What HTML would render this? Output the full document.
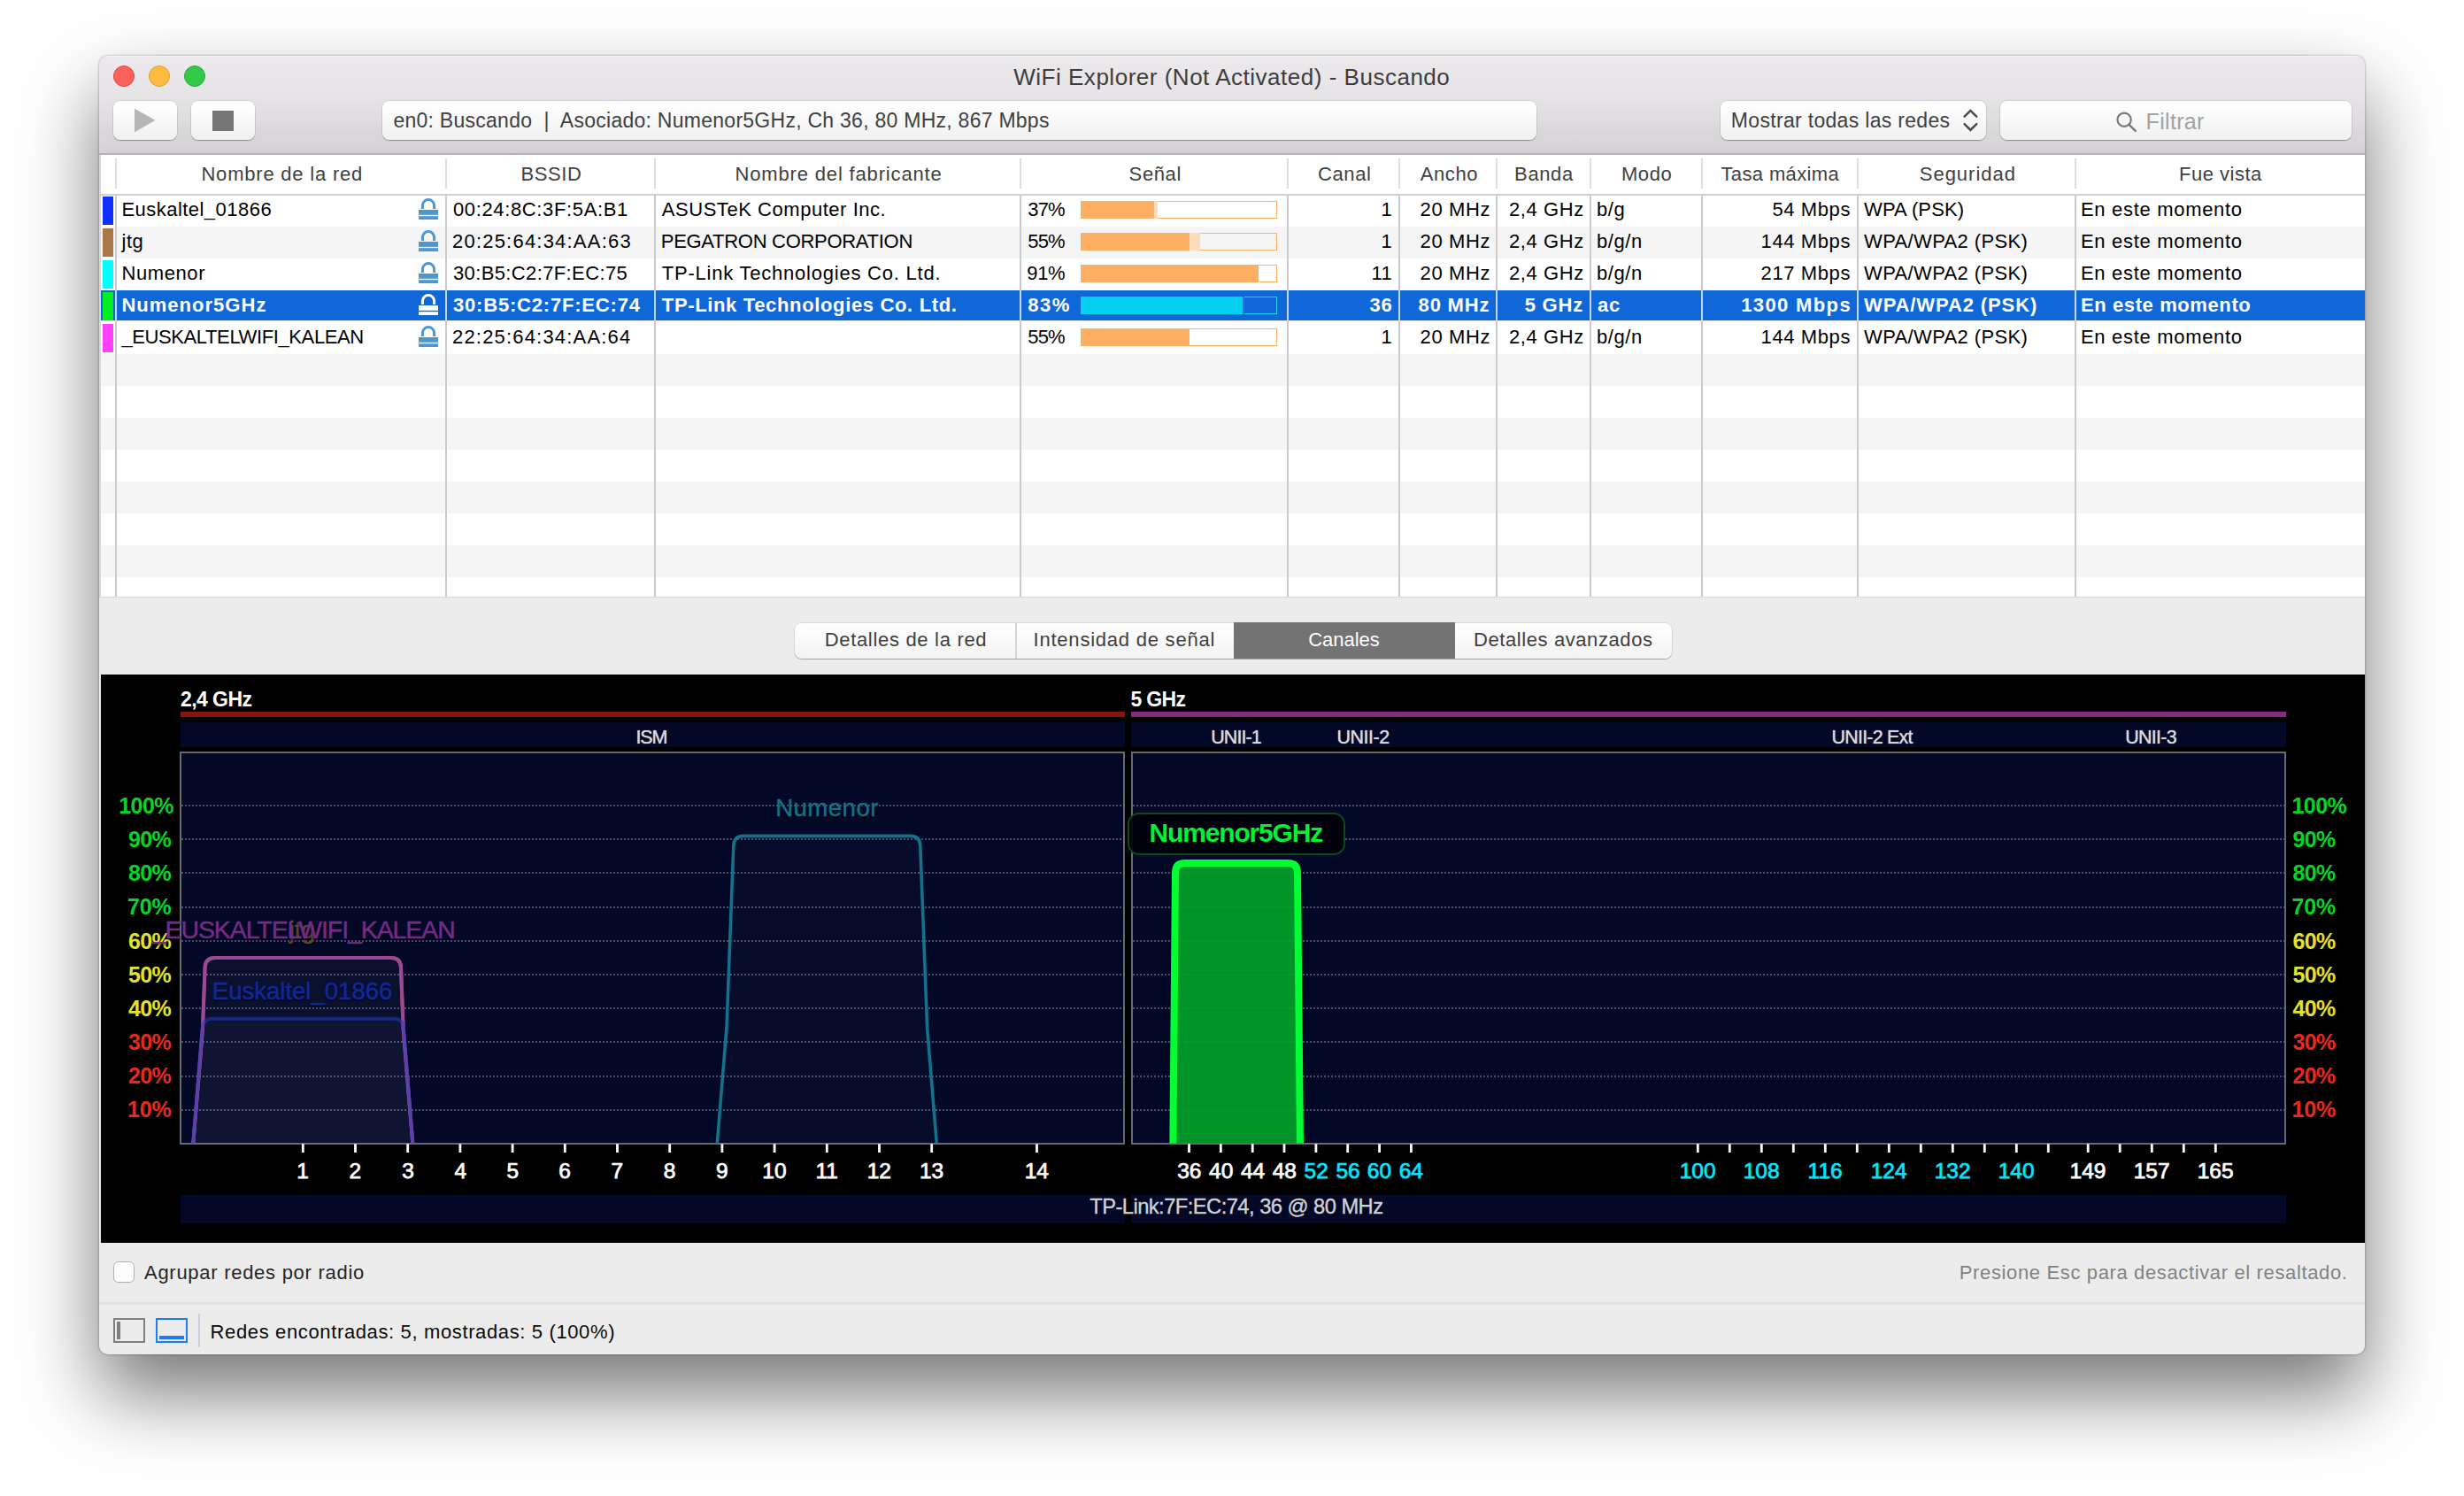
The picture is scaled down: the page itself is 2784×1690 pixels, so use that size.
<!DOCTYPE html>
<html lang="es"><head><meta charset="utf-8"><title>WiFi Explorer (Not Activated) - Buscando</title>
<style>
html,body{margin:0;padding:0;}
body{width:2784px;height:1690px;background:#fff;overflow:hidden;position:relative;font-family:"Liberation Sans", sans-serif;}
#win{position:absolute;left:112px;top:63px;width:2560px;height:1467px;border-radius:10px;background:#ececec;
box-shadow:0 44px 88px rgba(0,0,0,0.54),0 0 2.5px rgba(0,0,0,0.45);}
#clip{position:absolute;left:0;top:0;width:2560px;height:1467px;border-radius:10px;overflow:hidden;}
#clip div{position:absolute;box-sizing:border-box;}
#clip svg{position:absolute;overflow:visible;}
.t{font-family:"Liberation Sans", sans-serif;}
</style></head>
<body><div id="win"><div id="clip">
<div style="left:0.00px;top:0.00px;width:2560.00px;height:112.00px;background:linear-gradient(#ebe9eb 0%,#e6e4e6 40%,#d3d1d3 100%);border-bottom:2px solid #b4b2b4;border-top:1px solid #f6f5f6;"></div>
<div style="left:16.00px;top:11.00px;width:24.00px;height:24.00px;border-radius:50%;background:#fc605b;border:1px solid #e0443e;"></div>
<div style="left:56.00px;top:11.00px;width:24.00px;height:24.00px;border-radius:50%;background:#fdbc40;border:1px solid #dfa02a;"></div>
<div style="left:96.00px;top:11.00px;width:24.00px;height:24.00px;border-radius:50%;background:#34c84a;border:1px solid #27aa35;"></div>
<div id="t0" class="t" style="left:1033.25px;top:11.00px;font-size:26px;line-height:26px;height:26px;color:#3d3d3d;font-weight:normal;white-space:pre;letter-spacing:0.514px;">WiFi Explorer (Not Activated) - Buscando</div>
<div style="left:16.00px;top:51.00px;width:72.00px;height:44.00px;border-radius:8px;background:linear-gradient(#ffffff,#f1f1f1);box-shadow:0 1px 1px rgba(0,0,0,0.28),0 0 0 1px rgba(0,0,0,0.07);"></div>
<div style="left:104.00px;top:51.00px;width:72.00px;height:44.00px;border-radius:8px;background:linear-gradient(#ffffff,#f1f1f1);box-shadow:0 1px 1px rgba(0,0,0,0.28),0 0 0 1px rgba(0,0,0,0.07);"></div>
<svg style="left:40px;top:59px" width="26" height="30"><polygon points="0,0.8 0,27.6 23.4,13.7" fill="#b6b6b6"/></svg>
<div style="left:128.00px;top:61.50px;width:24.00px;height:23.50px;background:#757575;"></div>
<div style="left:320.00px;top:51.00px;width:1304.00px;height:44.00px;border-radius:8px;background:linear-gradient(#ffffff,#f1f1f1);box-shadow:0 1px 1px rgba(0,0,0,0.28),0 0 0 1px rgba(0,0,0,0.07);"></div>
<div id="t1" class="t" style="left:332.40px;top:61.50px;font-size:23px;line-height:23px;height:23px;color:#404040;font-weight:normal;white-space:pre;letter-spacing:0.263px;">en0: Buscando  |  Asociado: Numenor5GHz, Ch 36, 80 MHz, 867 Mbps</div>
<div style="left:1832.00px;top:51.00px;width:300.00px;height:44.00px;border-radius:8px;background:linear-gradient(#ffffff,#f1f1f1);box-shadow:0 1px 1px rgba(0,0,0,0.28),0 0 0 1px rgba(0,0,0,0.07);"></div>
<div id="t2" class="t" style="left:1843.80px;top:61.50px;font-size:23px;line-height:23px;height:23px;color:#404040;font-weight:normal;white-space:pre;letter-spacing:0.317px;">Mostrar todas las redes</div>
<svg style="left:2104px;top:61px" width="22" height="26"><path d="M3.6 7.6 L10.4 0.9 L17.2 7.6 M3.6 16.2 L10.4 22.9 L17.2 16.2" fill="none" stroke="#4a4a4a" stroke-width="2.5" stroke-linecap="round" stroke-linejoin="miter"/></svg>
<div style="left:2148.00px;top:51.00px;width:396.50px;height:44.00px;border-radius:8px;background:linear-gradient(#ffffff,#f1f1f1);box-shadow:0 1px 1px rgba(0,0,0,0.28),0 0 0 1px rgba(0,0,0,0.07);"></div>
<svg style="left:2278px;top:62px" width="26" height="26"><circle cx="10.1" cy="10.2" r="7.6" fill="none" stroke="#7a7a7a" stroke-width="2.2"/><path d="M15.6 15.8 L22.8 22.9" stroke="#7a7a7a" stroke-width="2.4" stroke-linecap="round"/></svg>
<div id="t3" class="t" style="left:2312.60px;top:61.50px;font-size:25px;line-height:25px;height:25px;color:#a2a2a2;font-weight:normal;white-space:pre;letter-spacing:0.308px;">Filtrar</div>
<div style="left:0.00px;top:112.00px;width:2560.00px;height:499.00px;background:#fff;"></div>
<div style="left:0.00px;top:611.00px;width:2560.00px;height:1.00px;background:#d6d6d6;"></div>
<div style="left:0.00px;top:112.00px;width:2.00px;height:499.00px;background:#d9d9d9;"></div>
<div style="left:2.00px;top:193.00px;width:2558.00px;height:36.00px;background:#f5f5f5;"></div>
<div style="left:2.00px;top:265.00px;width:2558.00px;height:36.00px;background:#f5f5f5;"></div>
<div style="left:2.00px;top:337.00px;width:2558.00px;height:36.00px;background:#f5f5f5;"></div>
<div style="left:2.00px;top:409.00px;width:2558.00px;height:36.00px;background:#f5f5f5;"></div>
<div style="left:2.00px;top:481.00px;width:2558.00px;height:36.00px;background:#f5f5f5;"></div>
<div style="left:2.00px;top:553.00px;width:2558.00px;height:36.00px;background:#f5f5f5;"></div>
<div style="left:0.00px;top:156.00px;width:2560.00px;height:1.50px;background:#d2d2d2;"></div>
<div style="left:2.00px;top:265.00px;width:2558.00px;height:34.00px;background:#1068d8;"></div>
<div style="left:18.00px;top:116.30px;width:2.00px;height:34.20px;background:#dedede;"></div>
<div style="left:18.00px;top:157.00px;width:2.00px;height:454.00px;background:#cccccc;"></div>
<div style="left:18.00px;top:265.00px;width:2.00px;height:34.00px;background:#c4d4ea;"></div>
<div style="left:390.50px;top:116.30px;width:2.00px;height:34.20px;background:#dedede;"></div>
<div style="left:390.50px;top:157.00px;width:2.00px;height:454.00px;background:#cccccc;"></div>
<div style="left:390.50px;top:265.00px;width:2.00px;height:34.00px;background:#c4d4ea;"></div>
<div style="left:627.00px;top:116.30px;width:2.00px;height:34.20px;background:#dedede;"></div>
<div style="left:627.00px;top:157.00px;width:2.00px;height:454.00px;background:#cccccc;"></div>
<div style="left:627.00px;top:265.00px;width:2.00px;height:34.00px;background:#c4d4ea;"></div>
<div style="left:1040.00px;top:116.30px;width:2.00px;height:34.20px;background:#dedede;"></div>
<div style="left:1040.00px;top:157.00px;width:2.00px;height:454.00px;background:#cccccc;"></div>
<div style="left:1040.00px;top:265.00px;width:2.00px;height:34.00px;background:#c4d4ea;"></div>
<div style="left:1342.00px;top:116.30px;width:2.00px;height:34.20px;background:#dedede;"></div>
<div style="left:1342.00px;top:157.00px;width:2.00px;height:454.00px;background:#cccccc;"></div>
<div style="left:1342.00px;top:265.00px;width:2.00px;height:34.00px;background:#c4d4ea;"></div>
<div style="left:1468.00px;top:116.30px;width:2.00px;height:34.20px;background:#dedede;"></div>
<div style="left:1468.00px;top:157.00px;width:2.00px;height:454.00px;background:#cccccc;"></div>
<div style="left:1468.00px;top:265.00px;width:2.00px;height:34.00px;background:#c4d4ea;"></div>
<div style="left:1578.00px;top:116.30px;width:2.00px;height:34.20px;background:#dedede;"></div>
<div style="left:1578.00px;top:157.00px;width:2.00px;height:454.00px;background:#cccccc;"></div>
<div style="left:1578.00px;top:265.00px;width:2.00px;height:34.00px;background:#c4d4ea;"></div>
<div style="left:1684.00px;top:116.30px;width:2.00px;height:34.20px;background:#dedede;"></div>
<div style="left:1684.00px;top:157.00px;width:2.00px;height:454.00px;background:#cccccc;"></div>
<div style="left:1684.00px;top:265.00px;width:2.00px;height:34.00px;background:#c4d4ea;"></div>
<div style="left:1809.50px;top:116.30px;width:2.00px;height:34.20px;background:#dedede;"></div>
<div style="left:1809.50px;top:157.00px;width:2.00px;height:454.00px;background:#cccccc;"></div>
<div style="left:1809.50px;top:265.00px;width:2.00px;height:34.00px;background:#c4d4ea;"></div>
<div style="left:1985.50px;top:116.30px;width:2.00px;height:34.20px;background:#dedede;"></div>
<div style="left:1985.50px;top:157.00px;width:2.00px;height:454.00px;background:#cccccc;"></div>
<div style="left:1985.50px;top:265.00px;width:2.00px;height:34.00px;background:#c4d4ea;"></div>
<div style="left:2232.00px;top:116.30px;width:2.00px;height:34.20px;background:#dedede;"></div>
<div style="left:2232.00px;top:157.00px;width:2.00px;height:454.00px;background:#cccccc;"></div>
<div style="left:2232.00px;top:265.00px;width:2.00px;height:34.00px;background:#c4d4ea;"></div>
<div id="t4" class="t" style="left:115.45px;top:122.50px;font-size:22px;line-height:22px;height:22px;color:#404040;font-weight:normal;white-space:pre;letter-spacing:0.791px;">Nombre de la red</div>
<div id="t5" class="t" style="left:476.48px;top:122.50px;font-size:22px;line-height:22px;height:22px;color:#404040;font-weight:normal;white-space:pre;letter-spacing:0.600px;">BSSID</div>
<div id="t6" class="t" style="left:718.50px;top:122.50px;font-size:22px;line-height:22px;height:22px;color:#404040;font-weight:normal;white-space:pre;letter-spacing:0.840px;">Nombre del fabricante</div>
<div id="t7" class="t" style="left:1163.61px;top:122.50px;font-size:22px;line-height:22px;height:22px;color:#404040;font-weight:normal;white-space:pre;letter-spacing:0.600px;">Señal</div>
<div id="t8" class="t" style="left:1377.00px;top:122.50px;font-size:22px;line-height:22px;height:22px;color:#404040;font-weight:normal;white-space:pre;letter-spacing:0.600px;">Canal</div>
<div id="t9" class="t" style="left:1492.73px;top:122.50px;font-size:22px;line-height:22px;height:22px;color:#404040;font-weight:normal;white-space:pre;letter-spacing:0.600px;">Ancho</div>
<div id="t10" class="t" style="left:1599.11px;top:122.50px;font-size:22px;line-height:22px;height:22px;color:#404040;font-weight:normal;white-space:pre;letter-spacing:0.600px;">Banda</div>
<div id="t11" class="t" style="left:1719.95px;top:122.50px;font-size:22px;line-height:22px;height:22px;color:#404040;font-weight:normal;white-space:pre;letter-spacing:0.600px;">Modo</div>
<div id="t12" class="t" style="left:1832.50px;top:122.50px;font-size:22px;line-height:22px;height:22px;color:#404040;font-weight:normal;white-space:pre;letter-spacing:0.364px;">Tasa máxima</div>
<div id="t13" class="t" style="left:2056.75px;top:122.50px;font-size:22px;line-height:22px;height:22px;color:#404040;font-weight:normal;white-space:pre;letter-spacing:0.992px;">Seguridad</div>
<div id="t14" class="t" style="left:2350.00px;top:122.50px;font-size:22px;line-height:22px;height:22px;color:#404040;font-weight:normal;white-space:pre;letter-spacing:0.497px;">Fue vista</div>
<div style="left:4.00px;top:159.00px;width:12.00px;height:32.00px;background:#1030ff;"></div>
<div id="t15" class="t" style="left:25.40px;top:162.50px;font-size:22px;line-height:22px;height:22px;color:#000;font-weight:normal;white-space:pre;letter-spacing:0.468px;">Euskaltel_01866</div>
<svg style="left:360px;top:161px" width="24" height="26"><path d="M5.4 12 V8.2 A6.6 6.6 0 0 1 18.6 8.2 V12" fill="none" stroke="#4f95cf" stroke-width="3"/><rect x="1" y="13" width="22" height="5.8" fill="#4f95cf"/><rect x="1" y="20.2" width="22" height="3.8" fill="#4f95cf"/></svg>
<div id="t16" class="t" style="left:400.00px;top:162.50px;font-size:22px;line-height:22px;height:22px;color:#000;font-weight:normal;white-space:pre;letter-spacing:0.632px;">00:24:8C:3F:5A:B1</div>
<div id="t17" class="t" style="left:635.80px;top:162.50px;font-size:22px;line-height:22px;height:22px;color:#000;font-weight:normal;white-space:pre;letter-spacing:0.541px;">ASUSTeK Computer Inc.</div>
<div id="t18" class="t" style="left:1049.20px;top:162.50px;font-size:22px;line-height:22px;height:22px;color:#000;font-weight:normal;white-space:pre;letter-spacing:-0.785px;">37%</div>
<div style="left:1109.00px;top:164.00px;width:222.00px;height:20.00px;border:1.5px solid #fdb063;"></div>
<div style="left:1109.00px;top:164.00px;width:86.80px;height:20.00px;background:#fbdcbc;"></div>
<div style="left:1109.00px;top:164.00px;width:83.03px;height:20.00px;background:#fdb063;"></div>
<div id="t19" class="t" style="left:1448.60px;top:162.50px;font-size:22px;line-height:22px;height:22px;color:#000;font-weight:normal;white-space:pre;letter-spacing:0.600px;">1</div>
<div id="t20" class="t" style="left:1492.60px;top:162.50px;font-size:22px;line-height:22px;height:22px;color:#000;font-weight:normal;white-space:pre;letter-spacing:0.600px;">20 MHz</div>
<div id="t21" class="t" style="left:1592.90px;top:162.50px;font-size:22px;line-height:22px;height:22px;color:#000;font-weight:normal;white-space:pre;letter-spacing:0.600px;">2,4 GHz</div>
<div id="t22" class="t" style="left:1691.90px;top:162.50px;font-size:22px;line-height:22px;height:22px;color:#000;font-weight:normal;white-space:pre;letter-spacing:0.600px;">b/g</div>
<div id="t23" class="t" style="left:1890.42px;top:162.50px;font-size:22px;line-height:22px;height:22px;color:#000;font-weight:normal;white-space:pre;letter-spacing:0.600px;">54 Mbps</div>
<div id="t24" class="t" style="left:1994.00px;top:162.50px;font-size:22px;line-height:22px;height:22px;color:#000;font-weight:normal;white-space:pre;letter-spacing:0.133px;">WPA (PSK)</div>
<div id="t25" class="t" style="left:2239.00px;top:162.50px;font-size:22px;line-height:22px;height:22px;color:#000;font-weight:normal;white-space:pre;letter-spacing:0.687px;">En este momento</div>
<div style="left:4.00px;top:195.00px;width:12.00px;height:32.00px;background:#a87848;"></div>
<div id="t26" class="t" style="left:25.40px;top:198.50px;font-size:22px;line-height:22px;height:22px;color:#000;font-weight:normal;white-space:pre;letter-spacing:0.600px;">jtg</div>
<svg style="left:360px;top:197px" width="24" height="26"><path d="M5.4 12 V8.2 A6.6 6.6 0 0 1 18.6 8.2 V12" fill="none" stroke="#4f95cf" stroke-width="3"/><rect x="1" y="13" width="22" height="5.8" fill="#4f95cf"/><rect x="1" y="20.2" width="22" height="3.8" fill="#4f95cf"/></svg>
<div id="t27" class="t" style="left:399.00px;top:198.50px;font-size:22px;line-height:22px;height:22px;color:#000;font-weight:normal;white-space:pre;letter-spacing:1.211px;">20:25:64:34:AA:63</div>
<div id="t28" class="t" style="left:634.80px;top:198.50px;font-size:22px;line-height:22px;height:22px;color:#000;font-weight:normal;white-space:pre;letter-spacing:-0.295px;">PEGATRON CORPORATION</div>
<div id="t29" class="t" style="left:1049.20px;top:198.50px;font-size:22px;line-height:22px;height:22px;color:#000;font-weight:normal;white-space:pre;letter-spacing:-0.785px;">55%</div>
<div style="left:1109.00px;top:200.00px;width:222.00px;height:20.00px;border:1.5px solid #fdb063;"></div>
<div style="left:1109.00px;top:200.00px;width:135.20px;height:20.00px;background:#fbdcbc;"></div>
<div style="left:1109.00px;top:200.00px;width:122.99px;height:20.00px;background:#fdb063;"></div>
<div id="t30" class="t" style="left:1448.60px;top:198.50px;font-size:22px;line-height:22px;height:22px;color:#000;font-weight:normal;white-space:pre;letter-spacing:0.600px;">1</div>
<div id="t31" class="t" style="left:1492.60px;top:198.50px;font-size:22px;line-height:22px;height:22px;color:#000;font-weight:normal;white-space:pre;letter-spacing:0.600px;">20 MHz</div>
<div id="t32" class="t" style="left:1592.90px;top:198.50px;font-size:22px;line-height:22px;height:22px;color:#000;font-weight:normal;white-space:pre;letter-spacing:0.600px;">2,4 GHz</div>
<div id="t33" class="t" style="left:1691.90px;top:198.50px;font-size:22px;line-height:22px;height:22px;color:#000;font-weight:normal;white-space:pre;letter-spacing:0.600px;">b/g/n</div>
<div id="t34" class="t" style="left:1877.58px;top:198.50px;font-size:22px;line-height:22px;height:22px;color:#000;font-weight:normal;white-space:pre;letter-spacing:0.600px;">144 Mbps</div>
<div id="t35" class="t" style="left:1994.00px;top:198.50px;font-size:22px;line-height:22px;height:22px;color:#000;font-weight:normal;white-space:pre;letter-spacing:0.364px;">WPA/WPA2 (PSK)</div>
<div id="t36" class="t" style="left:2239.00px;top:198.50px;font-size:22px;line-height:22px;height:22px;color:#000;font-weight:normal;white-space:pre;letter-spacing:0.687px;">En este momento</div>
<div style="left:4.00px;top:231.00px;width:12.00px;height:32.00px;background:#00ffff;"></div>
<div id="t37" class="t" style="left:25.40px;top:234.50px;font-size:22px;line-height:22px;height:22px;color:#000;font-weight:normal;white-space:pre;letter-spacing:0.600px;">Numenor</div>
<svg style="left:360px;top:233px" width="24" height="26"><path d="M5.4 12 V8.2 A6.6 6.6 0 0 1 18.6 8.2 V12" fill="none" stroke="#4f95cf" stroke-width="3"/><rect x="1" y="13" width="22" height="5.8" fill="#4f95cf"/><rect x="1" y="20.2" width="22" height="3.8" fill="#4f95cf"/></svg>
<div id="t38" class="t" style="left:400.00px;top:234.50px;font-size:22px;line-height:22px;height:22px;color:#000;font-weight:normal;white-space:pre;letter-spacing:0.373px;">30:B5:C2:7F:EC:75</div>
<div id="t39" class="t" style="left:635.80px;top:234.50px;font-size:22px;line-height:22px;height:22px;color:#000;font-weight:normal;white-space:pre;letter-spacing:0.772px;">TP-Link Technologies Co. Ltd.</div>
<div id="t40" class="t" style="left:1048.20px;top:234.50px;font-size:22px;line-height:22px;height:22px;color:#000;font-weight:normal;white-space:pre;letter-spacing:-0.285px;">91%</div>
<div style="left:1109.00px;top:236.00px;width:222.00px;height:20.00px;border:1.5px solid #fdb063;"></div>
<div style="left:1109.00px;top:236.00px;width:200.91px;height:20.00px;background:#fbdcbc;"></div>
<div style="left:1109.00px;top:236.00px;width:200.91px;height:20.00px;background:#fdb063;"></div>
<div id="t41" class="t" style="left:1437.40px;top:234.50px;font-size:22px;line-height:22px;height:22px;color:#000;font-weight:normal;white-space:pre;letter-spacing:0.600px;">11</div>
<div id="t42" class="t" style="left:1492.60px;top:234.50px;font-size:22px;line-height:22px;height:22px;color:#000;font-weight:normal;white-space:pre;letter-spacing:0.600px;">20 MHz</div>
<div id="t43" class="t" style="left:1592.90px;top:234.50px;font-size:22px;line-height:22px;height:22px;color:#000;font-weight:normal;white-space:pre;letter-spacing:0.600px;">2,4 GHz</div>
<div id="t44" class="t" style="left:1691.90px;top:234.50px;font-size:22px;line-height:22px;height:22px;color:#000;font-weight:normal;white-space:pre;letter-spacing:0.600px;">b/g/n</div>
<div id="t45" class="t" style="left:1877.58px;top:234.50px;font-size:22px;line-height:22px;height:22px;color:#000;font-weight:normal;white-space:pre;letter-spacing:0.600px;">217 Mbps</div>
<div id="t46" class="t" style="left:1994.00px;top:234.50px;font-size:22px;line-height:22px;height:22px;color:#000;font-weight:normal;white-space:pre;letter-spacing:0.364px;">WPA/WPA2 (PSK)</div>
<div id="t47" class="t" style="left:2239.00px;top:234.50px;font-size:22px;line-height:22px;height:22px;color:#000;font-weight:normal;white-space:pre;letter-spacing:0.687px;">En este momento</div>
<div style="left:4.00px;top:267.00px;width:12.00px;height:32.00px;background:#00ee22;"></div>
<div id="t48" class="t" style="left:25.40px;top:270.50px;font-size:22px;line-height:22px;height:22px;color:#fff;font-weight:bold;white-space:pre;letter-spacing:1.020px;">Numenor5GHz</div>
<svg style="left:360px;top:269px" width="24" height="26"><path d="M5.4 12 V8.2 A6.6 6.6 0 0 1 18.6 8.2 V12" fill="none" stroke="#ffffff" stroke-width="3"/><rect x="1" y="13" width="22" height="5.8" fill="#ffffff"/><rect x="1" y="20.2" width="22" height="3.8" fill="#ffffff"/></svg>
<div id="t49" class="t" style="left:400.00px;top:270.50px;font-size:22px;line-height:22px;height:22px;color:#fff;font-weight:bold;white-space:pre;letter-spacing:0.805px;">30:B5:C2:7F:EC:74</div>
<div id="t50" class="t" style="left:635.80px;top:270.50px;font-size:22px;line-height:22px;height:22px;color:#fff;font-weight:bold;white-space:pre;letter-spacing:0.650px;">TP-Link Technologies Co. Ltd.</div>
<div id="t51" class="t" style="left:1049.20px;top:270.50px;font-size:22px;line-height:22px;height:22px;color:#fff;font-weight:bold;white-space:pre;letter-spacing:1.565px;">83%</div>
<div style="left:1109.00px;top:272.00px;width:222.00px;height:20.00px;border:1.5px solid #20d8f4;"></div>
<div style="left:1109.00px;top:272.00px;width:185.37px;height:20.00px;background:#2a78dc;"></div>
<div style="left:1109.00px;top:272.00px;width:183.37px;height:20.00px;background:#06d0f0;"></div>
<div id="t52" class="t" style="left:1435.56px;top:270.50px;font-size:22px;line-height:22px;height:22px;color:#fff;font-weight:bold;white-space:pre;letter-spacing:0.800px;">36</div>
<div id="t53" class="t" style="left:1490.60px;top:270.50px;font-size:22px;line-height:22px;height:22px;color:#fff;font-weight:bold;white-space:pre;letter-spacing:0.800px;">80 MHz</div>
<div id="t54" class="t" style="left:1610.65px;top:270.50px;font-size:22px;line-height:22px;height:22px;color:#fff;font-weight:bold;white-space:pre;letter-spacing:0.800px;">5 GHz</div>
<div id="t55" class="t" style="left:1692.90px;top:270.50px;font-size:22px;line-height:22px;height:22px;color:#fff;font-weight:bold;white-space:pre;letter-spacing:0.800px;">ac</div>
<div id="t56" class="t" style="left:1855.20px;top:270.50px;font-size:22px;line-height:22px;height:22px;color:#fff;font-weight:bold;white-space:pre;letter-spacing:1.368px;">1300 Mbps</div>
<div id="t57" class="t" style="left:1994.00px;top:270.50px;font-size:22px;line-height:22px;height:22px;color:#fff;font-weight:bold;white-space:pre;letter-spacing:0.884px;">WPA/WPA2 (PSK)</div>
<div id="t58" class="t" style="left:2239.00px;top:270.50px;font-size:22px;line-height:22px;height:22px;color:#fff;font-weight:bold;white-space:pre;letter-spacing:0.598px;">En este momento</div>
<div style="left:4.00px;top:303.00px;width:12.00px;height:32.00px;background:#ff40ff;"></div>
<div id="t59" class="t" style="left:25.40px;top:306.50px;font-size:22px;line-height:22px;height:22px;color:#000;font-weight:normal;white-space:pre;letter-spacing:-0.391px;">_EUSKALTELWIFI_KALEAN</div>
<svg style="left:360px;top:305px" width="24" height="26"><path d="M5.4 12 V8.2 A6.6 6.6 0 0 1 18.6 8.2 V12" fill="none" stroke="#4f95cf" stroke-width="3"/><rect x="1" y="13" width="22" height="5.8" fill="#4f95cf"/><rect x="1" y="20.2" width="22" height="3.8" fill="#4f95cf"/></svg>
<div id="t60" class="t" style="left:399.00px;top:306.50px;font-size:22px;line-height:22px;height:22px;color:#000;font-weight:normal;white-space:pre;letter-spacing:1.186px;">22:25:64:34:AA:64</div>
<div id="t61" class="t" style="left:1049.20px;top:306.50px;font-size:22px;line-height:22px;height:22px;color:#000;font-weight:normal;white-space:pre;letter-spacing:-0.785px;">55%</div>
<div style="left:1109.00px;top:308.00px;width:222.00px;height:20.00px;border:1.5px solid #fdb063;"></div>
<div style="left:1109.00px;top:308.00px;width:122.99px;height:20.00px;background:#fbdcbc;"></div>
<div style="left:1109.00px;top:308.00px;width:122.99px;height:20.00px;background:#fdb063;"></div>
<div id="t62" class="t" style="left:1448.60px;top:306.50px;font-size:22px;line-height:22px;height:22px;color:#000;font-weight:normal;white-space:pre;letter-spacing:0.600px;">1</div>
<div id="t63" class="t" style="left:1492.60px;top:306.50px;font-size:22px;line-height:22px;height:22px;color:#000;font-weight:normal;white-space:pre;letter-spacing:0.600px;">20 MHz</div>
<div id="t64" class="t" style="left:1592.90px;top:306.50px;font-size:22px;line-height:22px;height:22px;color:#000;font-weight:normal;white-space:pre;letter-spacing:0.600px;">2,4 GHz</div>
<div id="t65" class="t" style="left:1691.90px;top:306.50px;font-size:22px;line-height:22px;height:22px;color:#000;font-weight:normal;white-space:pre;letter-spacing:0.600px;">b/g/n</div>
<div id="t66" class="t" style="left:1877.58px;top:306.50px;font-size:22px;line-height:22px;height:22px;color:#000;font-weight:normal;white-space:pre;letter-spacing:0.600px;">144 Mbps</div>
<div id="t67" class="t" style="left:1994.00px;top:306.50px;font-size:22px;line-height:22px;height:22px;color:#000;font-weight:normal;white-space:pre;letter-spacing:0.364px;">WPA/WPA2 (PSK)</div>
<div id="t68" class="t" style="left:2239.00px;top:306.50px;font-size:22px;line-height:22px;height:22px;color:#000;font-weight:normal;white-space:pre;letter-spacing:0.687px;">En este momento</div>
<div style="left:786.00px;top:640.50px;width:991.00px;height:40.60px;border-radius:8px;background:linear-gradient(#ffffff,#f3f3f3);box-shadow:0 1px 1px rgba(0,0,0,0.25),0 0 0 1px rgba(0,0,0,0.08);"></div>
<div style="left:1282.30px;top:640.00px;width:249.50px;height:41.40px;background:#737373;"></div>
<div style="left:1035.30px;top:641.00px;width:1.50px;height:39.60px;background:#d4d4d4;"></div>
<div id="t69" class="t" style="left:819.65px;top:648.50px;font-size:22px;line-height:22px;height:22px;color:#404040;font-weight:normal;white-space:pre;letter-spacing:0.690px;">Detalles de la red</div>
<div id="t70" class="t" style="left:1055.60px;top:648.50px;font-size:22px;line-height:22px;height:22px;color:#404040;font-weight:normal;white-space:pre;letter-spacing:0.771px;">Intensidad de señal</div>
<div id="t71" class="t" style="left:1366.14px;top:648.50px;font-size:22px;line-height:22px;height:22px;color:#ffffff;font-weight:normal;white-space:pre;letter-spacing:0.000px;">Canales</div>
<div id="t72" class="t" style="left:1553.05px;top:648.50px;font-size:22px;line-height:22px;height:22px;color:#404040;font-weight:normal;white-space:pre;letter-spacing:0.582px;">Detalles avanzados</div>
<div style="left:2.00px;top:699.00px;width:2558.00px;height:641.50px;background:#000;"></div>
<div id="t73" class="t" style="left:92.00px;top:715.50px;font-size:23px;line-height:23px;height:23px;color:#fff;font-weight:bold;white-space:pre;letter-spacing:-0.561px;">2,4 GHz</div>
<div id="t74" class="t" style="left:1165.50px;top:715.50px;font-size:23px;line-height:23px;height:23px;color:#fff;font-weight:bold;white-space:pre;letter-spacing:-0.670px;">5 GHz</div>
<div style="left:92.00px;top:741.00px;width:1067.00px;height:6.00px;background:#84180f;"></div>
<div style="left:1166.00px;top:741.00px;width:1305.00px;height:6.00px;background:#862a80;"></div>
<div style="left:92.00px;top:753.00px;width:1067.00px;height:28.00px;background:#020826;"></div>
<div style="left:1166.00px;top:753.00px;width:1305.00px;height:28.00px;background:#020826;"></div>
<div id="t75" class="t" style="left:606.45px;top:760.25px;font-size:21.5px;line-height:21.5px;height:21.5px;color:#d9d9d9;font-weight:normal;white-space:pre;letter-spacing:-1.107px;text-shadow:0 0 1px #d9d9d9;">ISM</div>
<div id="t76" class="t" style="left:1256.15px;top:760.25px;font-size:21.5px;line-height:21.5px;height:21.5px;color:#d9d9d9;font-weight:normal;white-space:pre;letter-spacing:-0.892px;text-shadow:0 0 1px #d9d9d9;">UNII-1</div>
<div id="t77" class="t" style="left:1398.45px;top:760.25px;font-size:21.5px;line-height:21.5px;height:21.5px;color:#d9d9d9;font-weight:normal;white-space:pre;letter-spacing:-0.492px;text-shadow:0 0 1px #d9d9d9;">UNII-2</div>
<div id="t78" class="t" style="left:1957.50px;top:760.25px;font-size:21.5px;line-height:21.5px;height:21.5px;color:#d9d9d9;font-weight:normal;white-space:pre;letter-spacing:-0.798px;text-shadow:0 0 1px #d9d9d9;">UNII-2 Ext</div>
<div id="t79" class="t" style="left:2289.15px;top:760.25px;font-size:21.5px;line-height:21.5px;height:21.5px;color:#d9d9d9;font-weight:normal;white-space:pre;letter-spacing:-0.692px;text-shadow:0 0 1px #d9d9d9;">UNII-3</div>
<div style="left:91.00px;top:786.00px;width:1068.00px;height:444.00px;background:#020826;border:2px solid #666a74;"></div>
<div style="left:1166.00px;top:786.00px;width:1305.00px;height:444.00px;background:#020826;border:2px solid #666a74;"></div>
<div style="left:92.00px;top:1287.00px;width:1067.00px;height:32.00px;background:#020826;"></div>
<div style="left:1166.00px;top:1287.00px;width:1305.00px;height:32.00px;background:#020826;"></div>
<div style="left:93.00px;top:1189.80px;width:1064.00px;height:2.00px;background-image:repeating-linear-gradient(90deg,#484e64 0,#484e64 2px,transparent 2px,transparent 4px);"></div>
<div style="left:1168.00px;top:1189.80px;width:1301.00px;height:2.00px;background-image:repeating-linear-gradient(90deg,#484e64 0,#484e64 2px,transparent 2px,transparent 4px);"></div>
<div style="left:93.00px;top:1151.60px;width:1064.00px;height:2.00px;background-image:repeating-linear-gradient(90deg,#484e64 0,#484e64 2px,transparent 2px,transparent 4px);"></div>
<div style="left:1168.00px;top:1151.60px;width:1301.00px;height:2.00px;background-image:repeating-linear-gradient(90deg,#484e64 0,#484e64 2px,transparent 2px,transparent 4px);"></div>
<div style="left:93.00px;top:1113.40px;width:1064.00px;height:2.00px;background-image:repeating-linear-gradient(90deg,#484e64 0,#484e64 2px,transparent 2px,transparent 4px);"></div>
<div style="left:1168.00px;top:1113.40px;width:1301.00px;height:2.00px;background-image:repeating-linear-gradient(90deg,#484e64 0,#484e64 2px,transparent 2px,transparent 4px);"></div>
<div style="left:93.00px;top:1075.20px;width:1064.00px;height:2.00px;background-image:repeating-linear-gradient(90deg,#484e64 0,#484e64 2px,transparent 2px,transparent 4px);"></div>
<div style="left:1168.00px;top:1075.20px;width:1301.00px;height:2.00px;background-image:repeating-linear-gradient(90deg,#484e64 0,#484e64 2px,transparent 2px,transparent 4px);"></div>
<div style="left:93.00px;top:1037.00px;width:1064.00px;height:2.00px;background-image:repeating-linear-gradient(90deg,#484e64 0,#484e64 2px,transparent 2px,transparent 4px);"></div>
<div style="left:1168.00px;top:1037.00px;width:1301.00px;height:2.00px;background-image:repeating-linear-gradient(90deg,#484e64 0,#484e64 2px,transparent 2px,transparent 4px);"></div>
<div style="left:93.00px;top:998.80px;width:1064.00px;height:2.00px;background-image:repeating-linear-gradient(90deg,#484e64 0,#484e64 2px,transparent 2px,transparent 4px);"></div>
<div style="left:1168.00px;top:998.80px;width:1301.00px;height:2.00px;background-image:repeating-linear-gradient(90deg,#484e64 0,#484e64 2px,transparent 2px,transparent 4px);"></div>
<div style="left:93.00px;top:960.60px;width:1064.00px;height:2.00px;background-image:repeating-linear-gradient(90deg,#484e64 0,#484e64 2px,transparent 2px,transparent 4px);"></div>
<div style="left:1168.00px;top:960.60px;width:1301.00px;height:2.00px;background-image:repeating-linear-gradient(90deg,#484e64 0,#484e64 2px,transparent 2px,transparent 4px);"></div>
<div style="left:93.00px;top:922.40px;width:1064.00px;height:2.00px;background-image:repeating-linear-gradient(90deg,#484e64 0,#484e64 2px,transparent 2px,transparent 4px);"></div>
<div style="left:1168.00px;top:922.40px;width:1301.00px;height:2.00px;background-image:repeating-linear-gradient(90deg,#484e64 0,#484e64 2px,transparent 2px,transparent 4px);"></div>
<div style="left:93.00px;top:884.20px;width:1064.00px;height:2.00px;background-image:repeating-linear-gradient(90deg,#484e64 0,#484e64 2px,transparent 2px,transparent 4px);"></div>
<div style="left:1168.00px;top:884.20px;width:1301.00px;height:2.00px;background-image:repeating-linear-gradient(90deg,#484e64 0,#484e64 2px,transparent 2px,transparent 4px);"></div>
<div style="left:93.00px;top:846.00px;width:1064.00px;height:2.00px;background-image:repeating-linear-gradient(90deg,#484e64 0,#484e64 2px,transparent 2px,transparent 4px);"></div>
<div style="left:1168.00px;top:846.00px;width:1301.00px;height:2.00px;background-image:repeating-linear-gradient(90deg,#484e64 0,#484e64 2px,transparent 2px,transparent 4px);"></div>
<svg style="left:0;top:0" width="2560" height="1467" viewBox="112 63 2560 1467"><defs><clipPath id="c1"><rect x="205" y="851" width="1064" height="440.5"/></clipPath><clipPath id="c2"><rect x="1280" y="851" width="1301" height="440.5"/></clipPath></defs><g clip-path="url(#c1)" fill="rgba(255,255,255,0.021)" stroke-width="4" stroke-linejoin="round"><path d="M218.1,1294.0 L229.0,1161.0 L231.6,1092.9 Q232.0,1081.9 243.0,1081.9 L441.6,1081.9 Q452.6,1081.9 453.0,1092.9 L455.6,1161.0 L466.5,1294.0" stroke="#7a5a3a"/><path d="M218.1,1294.0 L229.0,1161.0 L231.6,1092.9 Q232.0,1081.9 243.0,1081.9 L441.6,1081.9 Q452.6,1081.9 453.0,1092.9 L455.6,1161.0 L466.5,1294.0" stroke="#a04696"/><path d="M218.1,1294.0 L228.5,1161.7 Q229.4,1150.7 240.4,1150.7 L444.2,1150.7 Q455.2,1150.7 456.1,1161.7 L466.5,1294.0" stroke="#2438c0" stroke-opacity="0.55"/><path d="M810.1,1294.0 L821.0,1161.0 L828.8,955.4 Q829.2,944.4 840.2,944.4 L1028.4,944.4 Q1039.4,944.4 1039.8,955.4 L1047.6,1161.0 L1058.5,1294.0" stroke="#11728a" stroke-width="3.6"/></g><g clip-path="url(#c2)"><path d="M1325.3,1296 L1328,985.9 Q1328,974.9 1339,974.9 L1455,974.9 Q1466,974.9 1466,985.9 L1469,1296" fill="#00a42a" fill-opacity="0.9" stroke="#00ff33" stroke-width="8" stroke-linejoin="round"/></g><rect x="340.9" y="1292.3" width="2.8" height="9.7" fill="#fff"/><rect x="400.1" y="1292.3" width="2.8" height="9.7" fill="#fff"/><rect x="459.3" y="1292.3" width="2.8" height="9.7" fill="#fff"/><rect x="518.5" y="1292.3" width="2.8" height="9.7" fill="#fff"/><rect x="577.7" y="1292.3" width="2.8" height="9.7" fill="#fff"/><rect x="636.9" y="1292.3" width="2.8" height="9.7" fill="#fff"/><rect x="696.1" y="1292.3" width="2.8" height="9.7" fill="#fff"/><rect x="755.3" y="1292.3" width="2.8" height="9.7" fill="#fff"/><rect x="814.5" y="1292.3" width="2.8" height="9.7" fill="#fff"/><rect x="873.7" y="1292.3" width="2.8" height="9.7" fill="#fff"/><rect x="932.9" y="1292.3" width="2.8" height="9.7" fill="#fff"/><rect x="992.1" y="1292.3" width="2.8" height="9.7" fill="#fff"/><rect x="1051.3" y="1292.3" width="2.8" height="9.7" fill="#fff"/><rect x="1170.1" y="1292.3" width="2.8" height="9.7" fill="#fff"/><rect x="1342.1" y="1292.3" width="2.8" height="9.7" fill="#fff"/><rect x="1377.9" y="1292.3" width="2.8" height="9.7" fill="#fff"/><rect x="1413.8" y="1292.3" width="2.8" height="9.7" fill="#fff"/><rect x="1449.6" y="1292.3" width="2.8" height="9.7" fill="#fff"/><rect x="1485.5" y="1292.3" width="2.8" height="9.7" fill="#fff"/><rect x="1521.3" y="1292.3" width="2.8" height="9.7" fill="#fff"/><rect x="1557.2" y="1292.3" width="2.8" height="9.7" fill="#fff"/><rect x="1593.0" y="1292.3" width="2.8" height="9.7" fill="#fff"/><rect x="1916.9" y="1292.3" width="2.8" height="9.7" fill="#fff"/><rect x="1952.9" y="1292.3" width="2.8" height="9.7" fill="#fff"/><rect x="1988.9" y="1292.3" width="2.8" height="9.7" fill="#fff"/><rect x="2024.9" y="1292.3" width="2.8" height="9.7" fill="#fff"/><rect x="2060.9" y="1292.3" width="2.8" height="9.7" fill="#fff"/><rect x="2096.9" y="1292.3" width="2.8" height="9.7" fill="#fff"/><rect x="2132.9" y="1292.3" width="2.8" height="9.7" fill="#fff"/><rect x="2168.9" y="1292.3" width="2.8" height="9.7" fill="#fff"/><rect x="2204.9" y="1292.3" width="2.8" height="9.7" fill="#fff"/><rect x="2240.9" y="1292.3" width="2.8" height="9.7" fill="#fff"/><rect x="2276.9" y="1292.3" width="2.8" height="9.7" fill="#fff"/><rect x="2312.9" y="1292.3" width="2.8" height="9.7" fill="#fff"/><rect x="2357.8" y="1292.3" width="2.8" height="9.7" fill="#fff"/><rect x="2393.8" y="1292.3" width="2.8" height="9.7" fill="#fff"/><rect x="2429.9" y="1292.3" width="2.8" height="9.7" fill="#fff"/><rect x="2465.9" y="1292.3" width="2.8" height="9.7" fill="#fff"/><rect x="2501.9" y="1292.3" width="2.8" height="9.7" fill="#fff"/></svg>
<div id="t80" class="t" style="left:32.00px;top:1177.50px;font-size:25px;line-height:25px;height:25px;color:#e62a1e;font-weight:bold;white-space:pre;letter-spacing:-0.104px;">10%</div>
<div id="t81" class="t" style="left:2477.50px;top:1177.50px;font-size:25px;line-height:25px;height:25px;color:#e62a1e;font-weight:bold;white-space:pre;letter-spacing:-0.104px;">10%</div>
<div id="t82" class="t" style="left:33.00px;top:1139.50px;font-size:25px;line-height:25px;height:25px;color:#e62a1e;font-weight:bold;white-space:pre;letter-spacing:-0.604px;">20%</div>
<div id="t83" class="t" style="left:2478.50px;top:1139.50px;font-size:25px;line-height:25px;height:25px;color:#e62a1e;font-weight:bold;white-space:pre;letter-spacing:-0.604px;">20%</div>
<div id="t84" class="t" style="left:33.00px;top:1101.50px;font-size:25px;line-height:25px;height:25px;color:#e62a1e;font-weight:bold;white-space:pre;letter-spacing:-0.604px;">30%</div>
<div id="t85" class="t" style="left:2478.50px;top:1101.50px;font-size:25px;line-height:25px;height:25px;color:#e62a1e;font-weight:bold;white-space:pre;letter-spacing:-0.604px;">30%</div>
<div id="t86" class="t" style="left:33.00px;top:1063.50px;font-size:25px;line-height:25px;height:25px;color:#e2e22a;font-weight:bold;white-space:pre;letter-spacing:-0.604px;">40%</div>
<div id="t87" class="t" style="left:2478.50px;top:1063.50px;font-size:25px;line-height:25px;height:25px;color:#e2e22a;font-weight:bold;white-space:pre;letter-spacing:-0.604px;">40%</div>
<div id="t88" class="t" style="left:33.00px;top:1025.50px;font-size:25px;line-height:25px;height:25px;color:#e2e22a;font-weight:bold;white-space:pre;letter-spacing:-0.604px;">50%</div>
<div id="t89" class="t" style="left:2478.50px;top:1025.50px;font-size:25px;line-height:25px;height:25px;color:#e2e22a;font-weight:bold;white-space:pre;letter-spacing:-0.604px;">50%</div>
<div id="t90" class="t" style="left:33.00px;top:987.50px;font-size:25px;line-height:25px;height:25px;color:#e2e22a;font-weight:bold;white-space:pre;letter-spacing:-0.604px;">60%</div>
<div id="t91" class="t" style="left:2478.50px;top:987.50px;font-size:25px;line-height:25px;height:25px;color:#e2e22a;font-weight:bold;white-space:pre;letter-spacing:-0.604px;">60%</div>
<div id="t92" class="t" style="left:32.00px;top:948.50px;font-size:25px;line-height:25px;height:25px;color:#08d426;font-weight:bold;white-space:pre;letter-spacing:-0.104px;">70%</div>
<div id="t93" class="t" style="left:2477.50px;top:948.50px;font-size:25px;line-height:25px;height:25px;color:#08d426;font-weight:bold;white-space:pre;letter-spacing:-0.104px;">70%</div>
<div id="t94" class="t" style="left:33.00px;top:910.50px;font-size:25px;line-height:25px;height:25px;color:#08d426;font-weight:bold;white-space:pre;letter-spacing:-0.604px;">80%</div>
<div id="t95" class="t" style="left:2478.50px;top:910.50px;font-size:25px;line-height:25px;height:25px;color:#08d426;font-weight:bold;white-space:pre;letter-spacing:-0.604px;">80%</div>
<div id="t96" class="t" style="left:33.00px;top:872.50px;font-size:25px;line-height:25px;height:25px;color:#08d426;font-weight:bold;white-space:pre;letter-spacing:-0.604px;">90%</div>
<div id="t97" class="t" style="left:2478.50px;top:872.50px;font-size:25px;line-height:25px;height:25px;color:#08d426;font-weight:bold;white-space:pre;letter-spacing:-0.604px;">90%</div>
<div id="t98" class="t" style="left:22.20px;top:834.50px;font-size:25px;line-height:25px;height:25px;color:#08d426;font-weight:bold;white-space:pre;letter-spacing:-0.537px;">100%</div>
<div id="t99" class="t" style="left:2477.50px;top:834.50px;font-size:25px;line-height:25px;height:25px;color:#08d426;font-weight:bold;white-space:pre;letter-spacing:-0.537px;">100%</div>
<div id="t100" class="t" style="left:223.30px;top:1248.25px;font-size:24.5px;line-height:24.5px;height:24.5px;color:#fff;font-weight:normal;white-space:pre;letter-spacing:0.000px;-webkit-text-stroke:0.75px #fff;">1</div>
<div id="t101" class="t" style="left:282.50px;top:1248.25px;font-size:24.5px;line-height:24.5px;height:24.5px;color:#fff;font-weight:normal;white-space:pre;letter-spacing:0.000px;-webkit-text-stroke:0.75px #fff;">2</div>
<div id="t102" class="t" style="left:342.20px;top:1248.25px;font-size:24.5px;line-height:24.5px;height:24.5px;color:#fff;font-weight:normal;white-space:pre;letter-spacing:0.000px;-webkit-text-stroke:0.75px #fff;">3</div>
<div id="t103" class="t" style="left:401.40px;top:1248.25px;font-size:24.5px;line-height:24.5px;height:24.5px;color:#fff;font-weight:normal;white-space:pre;letter-spacing:0.000px;-webkit-text-stroke:0.75px #fff;">4</div>
<div id="t104" class="t" style="left:460.60px;top:1248.25px;font-size:24.5px;line-height:24.5px;height:24.5px;color:#fff;font-weight:normal;white-space:pre;letter-spacing:0.000px;-webkit-text-stroke:0.75px #fff;">5</div>
<div id="t105" class="t" style="left:519.30px;top:1248.25px;font-size:24.5px;line-height:24.5px;height:24.5px;color:#fff;font-weight:normal;white-space:pre;letter-spacing:0.000px;-webkit-text-stroke:0.75px #fff;">6</div>
<div id="t106" class="t" style="left:578.50px;top:1248.25px;font-size:24.5px;line-height:24.5px;height:24.5px;color:#fff;font-weight:normal;white-space:pre;letter-spacing:0.000px;-webkit-text-stroke:0.75px #fff;">7</div>
<div id="t107" class="t" style="left:637.70px;top:1248.25px;font-size:24.5px;line-height:24.5px;height:24.5px;color:#fff;font-weight:normal;white-space:pre;letter-spacing:0.000px;-webkit-text-stroke:0.75px #fff;">8</div>
<div id="t108" class="t" style="left:696.90px;top:1248.25px;font-size:24.5px;line-height:24.5px;height:24.5px;color:#fff;font-weight:normal;white-space:pre;letter-spacing:0.000px;-webkit-text-stroke:0.75px #fff;">9</div>
<div id="t109" class="t" style="left:749.29px;top:1248.25px;font-size:24.5px;line-height:24.5px;height:24.5px;color:#fff;font-weight:normal;white-space:pre;letter-spacing:0.000px;-webkit-text-stroke:0.75px #fff;">10</div>
<div id="t110" class="t" style="left:809.40px;top:1248.25px;font-size:24.5px;line-height:24.5px;height:24.5px;color:#fff;font-weight:normal;white-space:pre;letter-spacing:0.000px;-webkit-text-stroke:0.75px #fff;">11</div>
<div id="t111" class="t" style="left:867.69px;top:1248.25px;font-size:24.5px;line-height:24.5px;height:24.5px;color:#fff;font-weight:normal;white-space:pre;letter-spacing:0.000px;-webkit-text-stroke:0.75px #fff;">12</div>
<div id="t112" class="t" style="left:926.89px;top:1248.25px;font-size:24.5px;line-height:24.5px;height:24.5px;color:#fff;font-weight:normal;white-space:pre;letter-spacing:0.000px;-webkit-text-stroke:0.75px #fff;">13</div>
<div id="t113" class="t" style="left:1045.69px;top:1248.25px;font-size:24.5px;line-height:24.5px;height:24.5px;color:#fff;font-weight:normal;white-space:pre;letter-spacing:0.000px;-webkit-text-stroke:0.75px #fff;">14</div>
<div id="t114" class="t" style="left:1218.19px;top:1248.25px;font-size:24.5px;line-height:24.5px;height:24.5px;color:#fff;font-weight:normal;white-space:pre;letter-spacing:0.000px;-webkit-text-stroke:0.75px #fff;">36</div>
<div id="t115" class="t" style="left:1254.04px;top:1248.25px;font-size:24.5px;line-height:24.5px;height:24.5px;color:#fff;font-weight:normal;white-space:pre;letter-spacing:0.000px;-webkit-text-stroke:0.75px #fff;">40</div>
<div id="t116" class="t" style="left:1289.89px;top:1248.25px;font-size:24.5px;line-height:24.5px;height:24.5px;color:#fff;font-weight:normal;white-space:pre;letter-spacing:0.000px;-webkit-text-stroke:0.75px #fff;">44</div>
<div id="t117" class="t" style="left:1325.74px;top:1248.25px;font-size:24.5px;line-height:24.5px;height:24.5px;color:#fff;font-weight:normal;white-space:pre;letter-spacing:0.000px;-webkit-text-stroke:0.75px #fff;">48</div>
<div id="t118" class="t" style="left:1361.59px;top:1248.25px;font-size:24.5px;line-height:24.5px;height:24.5px;color:#00e8ff;font-weight:normal;white-space:pre;letter-spacing:0.000px;-webkit-text-stroke:0.75px #00e8ff;">52</div>
<div id="t119" class="t" style="left:1397.44px;top:1248.25px;font-size:24.5px;line-height:24.5px;height:24.5px;color:#00e8ff;font-weight:normal;white-space:pre;letter-spacing:0.000px;-webkit-text-stroke:0.75px #00e8ff;">56</div>
<div id="t120" class="t" style="left:1432.79px;top:1248.25px;font-size:24.5px;line-height:24.5px;height:24.5px;color:#00e8ff;font-weight:normal;white-space:pre;letter-spacing:0.000px;-webkit-text-stroke:0.75px #00e8ff;">60</div>
<div id="t121" class="t" style="left:1468.64px;top:1248.25px;font-size:24.5px;line-height:24.5px;height:24.5px;color:#00e8ff;font-weight:normal;white-space:pre;letter-spacing:0.000px;-webkit-text-stroke:0.75px #00e8ff;">64</div>
<div id="t122" class="t" style="left:1785.67px;top:1248.25px;font-size:24.5px;line-height:24.5px;height:24.5px;color:#00e8ff;font-weight:normal;white-space:pre;letter-spacing:0.000px;-webkit-text-stroke:0.75px #00e8ff;">100</div>
<div id="t123" class="t" style="left:1857.67px;top:1248.25px;font-size:24.5px;line-height:24.5px;height:24.5px;color:#00e8ff;font-weight:normal;white-space:pre;letter-spacing:0.000px;-webkit-text-stroke:0.75px #00e8ff;">108</div>
<div id="t124" class="t" style="left:1930.58px;top:1248.25px;font-size:24.5px;line-height:24.5px;height:24.5px;color:#00e8ff;font-weight:normal;white-space:pre;letter-spacing:0.000px;-webkit-text-stroke:0.75px #00e8ff;">116</div>
<div id="t125" class="t" style="left:2001.67px;top:1248.25px;font-size:24.5px;line-height:24.5px;height:24.5px;color:#00e8ff;font-weight:normal;white-space:pre;letter-spacing:0.000px;-webkit-text-stroke:0.75px #00e8ff;">124</div>
<div id="t126" class="t" style="left:2073.67px;top:1248.25px;font-size:24.5px;line-height:24.5px;height:24.5px;color:#00e8ff;font-weight:normal;white-space:pre;letter-spacing:0.000px;-webkit-text-stroke:0.75px #00e8ff;">132</div>
<div id="t127" class="t" style="left:2145.67px;top:1248.25px;font-size:24.5px;line-height:24.5px;height:24.5px;color:#00e8ff;font-weight:normal;white-space:pre;letter-spacing:0.000px;-webkit-text-stroke:0.75px #00e8ff;">140</div>
<div id="t128" class="t" style="left:2226.57px;top:1248.25px;font-size:24.5px;line-height:24.5px;height:24.5px;color:#fff;font-weight:normal;white-space:pre;letter-spacing:0.000px;-webkit-text-stroke:0.75px #fff;">149</div>
<div id="t129" class="t" style="left:2298.63px;top:1248.25px;font-size:24.5px;line-height:24.5px;height:24.5px;color:#fff;font-weight:normal;white-space:pre;letter-spacing:0.000px;-webkit-text-stroke:0.75px #fff;">157</div>
<div id="t130" class="t" style="left:2370.69px;top:1248.25px;font-size:24.5px;line-height:24.5px;height:24.5px;color:#fff;font-weight:normal;white-space:pre;letter-spacing:0.000px;-webkit-text-stroke:0.75px #fff;">165</div>
<div id="t131" class="t" style="left:214.75px;top:972.80px;font-size:28.4px;line-height:28.4px;height:28.4px;color:#5e4530;font-weight:normal;white-space:pre;letter-spacing:-0.348px;text-shadow:0 2px 2px rgba(0,0,0,0.55);-webkit-text-stroke:0.4px #5e4530;">jtg</div>
<div id="t132" class="t" style="left:59.80px;top:972.80px;font-size:28.4px;line-height:28.4px;height:28.4px;color:#752a88;font-weight:normal;white-space:pre;letter-spacing:-1.026px;text-shadow:0 2px 2px rgba(0,0,0,0.55);-webkit-text-stroke:0.5px #752a88;">_EUSKALTELWIFI_KALEAN</div>
<div id="t133" class="t" style="left:127.75px;top:1042.70px;font-size:27.6px;line-height:27.6px;height:27.6px;color:#10289a;font-weight:normal;white-space:pre;letter-spacing:-0.028px;text-shadow:0 2px 2px rgba(0,0,0,0.55);-webkit-text-stroke:0.5px #10289a;">Euskaltel_01866</div>
<div id="t134" class="t" style="left:764.20px;top:835.65px;font-size:27.7px;line-height:27.7px;height:27.7px;color:#0f7484;font-weight:normal;white-space:pre;letter-spacing:0.391px;text-shadow:0 2px 2px rgba(0,0,0,0.55);-webkit-text-stroke:0.4px #0f7484;">Numenor</div>
<div style="left:1162.40px;top:855.00px;width:245.60px;height:48.20px;border-radius:13px;background:rgba(0,0,8,0.9);border:2px solid #0c4a1c;"></div>
<div id="t135" class="t" style="left:1186.60px;top:862.50px;font-size:30px;line-height:30px;height:30px;color:#00f234;font-weight:bold;white-space:pre;letter-spacing:-1.176px;">Numenor5GHz</div>
<div id="t136" class="t" style="left:1119.20px;top:1289.15px;font-size:23.7px;line-height:23.7px;height:23.7px;color:#d2d2d2;font-weight:normal;white-space:pre;letter-spacing:-0.526px;-webkit-text-stroke:0.35px #d2d2d2;">TP-Link:7F:EC:74, 36 @ 80 MHz</div>
<div style="left:16.00px;top:1362.00px;width:24.00px;height:24.00px;border-radius:5.5px;background:linear-gradient(#fff,#fbfbfb);border:1.5px solid #adadad;"></div>
<div id="t137" class="t" style="left:51.00px;top:1363.50px;font-size:22px;line-height:22px;height:22px;color:#262626;font-weight:normal;white-space:pre;letter-spacing:0.722px;">Agrupar redes por radio</div>
<div id="t138" class="t" style="left:2101.80px;top:1363.50px;font-size:22px;line-height:22px;height:22px;color:#828282;font-weight:normal;white-space:pre;letter-spacing:0.634px;">Presione Esc para desactivar el resaltado.</div>
<div style="left:0.00px;top:1408.30px;width:2560.00px;height:2.40px;background:#e0e0e0;"></div>
<div style="left:16.00px;top:1426.00px;width:36.00px;height:28.00px;border:2.5px solid #7f7f7f;"></div>
<div style="left:19.50px;top:1429.80px;width:4.50px;height:20.00px;background:#7f7f7f;"></div>
<div style="left:64.00px;top:1426.00px;width:36.00px;height:28.00px;border:2.5px solid #1a7bfb;"></div>
<div style="left:68.00px;top:1445.80px;width:28.00px;height:4.20px;background:#1a7bfb;"></div>
<div style="left:112.00px;top:1421.00px;width:1.60px;height:37.50px;background:#d0d0d0;"></div>
<div id="t139" class="t" style="left:125.60px;top:1430.50px;font-size:22px;line-height:22px;height:22px;color:#0a0a0a;font-weight:normal;white-space:pre;letter-spacing:0.631px;">Redes encontradas: 5, mostradas: 5 (100%)</div>
</div></div></body></html>
